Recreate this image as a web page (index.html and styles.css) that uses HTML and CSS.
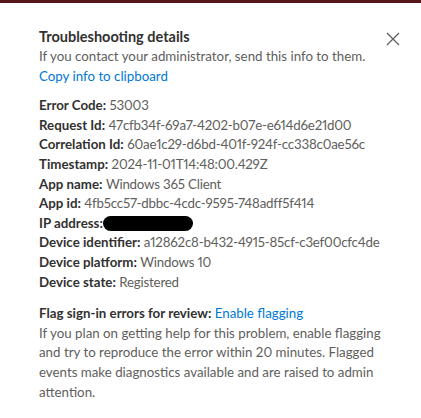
FILE: index.html
```html
<!DOCTYPE html>
<html lang="en">
<head>
<meta charset="utf-8">
<title>Troubleshooting details</title>
<link rel="stylesheet" href="styles.css">
</head>
<body>
<div class="topbar"></div>
<div class="panel">
  <div class="header">
    <div class="intro">
      <h1 class="title">Troubleshooting details</h1>
      <p class="text">If you contact your administrator, send this info to them.</p>
      <a class="link" href="#">Copy info to clipboard</a>
    </div>
    <button class="close" aria-label="Close">
      <svg width="14" height="14" viewBox="0 0 14 14"><path d="M1 1L13 13M13 1L1 13" stroke="#605e5c" stroke-width="1.3" fill="none"/></svg>
    </button>
  </div>
  <div class="details">
    <div class="row"><b>Error Code:</b> <span class="val">53003</span></div>
    <div class="row"><b>Request Id:</b> <span class="val">47cfb34f-69a7-4202-b07e-e614d6e21d00</span></div>
    <div class="row"><b>Correlation Id:</b> <span class="val">60ae1c29-d6bd-401f-924f-cc338c0ae56c</span></div>
    <div class="row"><b>Timestamp:</b> <span class="val">2024-11-01T14:48:00.429Z</span></div>
    <div class="row"><b>App name:</b> <span class="val">Windows 365 Client</span></div>
    <div class="row"><b>App id:</b> <span class="val">4fb5cc57-dbbc-4cdc-9595-748adff5f414</span></div>
    <div class="row"><b>IP address:</b><span class="redact"></span></div>
    <div class="row"><b>Device identifier:</b> <span class="val">a12862c8-b432-4915-85cf-c3ef00cfc4de</span></div>
    <div class="row"><b>Device platform:</b> <span class="val">Windows 10</span></div>
    <div class="row"><b>Device state:</b> <span class="val">Registered</span></div>
  </div>
  <div class="flag">
    <div class="row"><b>Flag sign-in errors for review:</b> <a class="link" href="#">Enable flagging</a></div>
    <p class="text">If you plan on getting help for this problem, enable flagging and try to reproduce the error within 20 minutes. Flagged events make diagnostics available and are raised to admin attention.</p>
  </div>
</div>
</body>
</html>
```
FILE: styles.css
```css
html, body {
  margin: 0;
  padding: 0;
  background: #ffffff;
}
body {
  font-family: Lato, "Noto Sans", sans-serif;
  font-size: 13.3px;
  line-height: 19.6px;
  color: #605e5c;
  font-variant-numeric: proportional-nums;
}
.topbar {
  height: 3px;
  background: #55161a;
}
.panel {
  padding: 23px 20px 0 39px;
}
.header {
  display: flex;
  justify-content: space-between;
  align-items: flex-start;
}
.title {
  margin: 0;
  font-size: 14.5px;
  line-height: 21px;
  font-weight: 700;
  color: #323130;
}
.text {
  margin: 0;
  color: #605e5c;
}
.link {
  color: #0078d4;
  text-decoration: none;
}
.close {
  border: 0;
  background: none;
  padding: 0;
  margin: 6px 1px 0 0;
  width: 14px;
  height: 14px;
  display: flex;
}
.details {
  margin-top: 10px;
  display: flex;
  flex-direction: column;
}
.row b {
  font-weight: 700;
  color: #323130;
}
.val {
  letter-spacing: -0.2px;
}
.redact {
  display: inline-block;
  width: 90px;
  height: 15px;
  background: #000;
  border-radius: 8px;
  vertical-align: -3px;
}
.flag {
  margin-top: 12px;
  padding-right: 10px;
}
```
